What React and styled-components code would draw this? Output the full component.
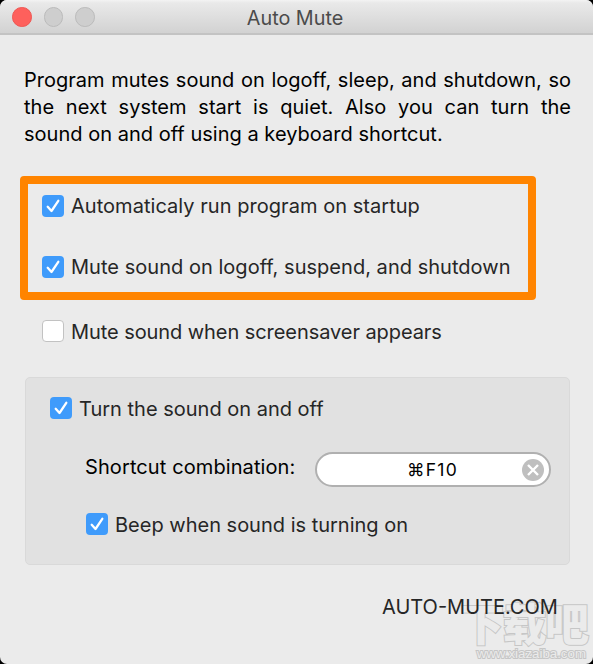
import { useState } from 'react';
import styled, { createGlobalStyle } from 'styled-components';

const GlobalStyle = createGlobalStyle`
    * {
        box-sizing: border-box;
    }

    body {
        margin: 0;
        background: #000;
        overflow: hidden;
    }
`;

const startupOptions = [
    { id: 'startup', label: 'Automaticaly run program on startup', spacing: '0.04px' },
    { id: 'logoff', label: 'Mute sound on logoff, suspend, and shutdown', spacing: '0.03px' },
];

const CheckOption = ({ label, checked, onToggle, spacing, lift }) => (
    <OptionLabel>
        <HiddenInput type="checkbox" checked={checked} onChange={onToggle} />
        <CheckBox $checked={checked}>
            {checked && (
                <svg width="22" height="22" viewBox="0 0 22 22" fill="none">
                    <path
                        d="M5.7 11.8 L9.5 16 L16.3 5.8"
                        stroke="#fff"
                        strokeWidth="2.3"
                        strokeLinecap="round"
                        strokeLinejoin="round"
                    />
                </svg>
            )}
        </CheckBox>
        <OptionText $spacing={spacing} $lift={lift}>
            {label}
        </OptionText>
    </OptionLabel>
);

const App = () => {
    const [options, setOptions] = useState({
        startup: true,
        logoff: true,
        screensaver: false,
        shortcut: true,
        beep: true,
    });
    const [shortcut, setShortcut] = useState('⌘F10');

    const toggle = (id) => setOptions((prev) => ({ ...prev, [id]: !prev[id] }));

    return (
        <>
            <GlobalStyle />
            <Window>
                <TitleBar>
                    <Lights>
                        <Light $active />
                        <Light />
                        <Light />
                    </Lights>
                    <Title>Auto Mute</Title>
                </TitleBar>
                <Content>
                    <Description>
                        Program mutes sound on logoff, sleep, and shutdown, so the next system start is
                        quiet. Also you can turn the sound&nbsp;on and off using a keyboard shortcut.
                    </Description>
                    <Highlight>
                        {startupOptions.map(({ id, label, spacing }) => (
                            <CheckOption
                                key={id}
                                label={label}
                                spacing={spacing}
                                lift
                                checked={options[id]}
                                onToggle={() => toggle(id)}
                            />
                        ))}
                    </Highlight>
                    <ScreensaverRow>
                        <CheckOption
                            label="Mute sound when screensaver appears"
                            spacing="-0.07px"
                            checked={options.screensaver}
                            onToggle={() => toggle('screensaver')}
                        />
                    </ScreensaverRow>
                    <Panel>
                        <CheckOption
                            label="Turn the sound on and off"
                            checked={options.shortcut}
                            onToggle={() => toggle('shortcut')}
                        />
                        <ShortcutRow>
                            <ShortcutLabel>Shortcut combination:</ShortcutLabel>
                            <ShortcutField>
                                <ShortcutValue>{shortcut}</ShortcutValue>
                                <ClearButton aria-label="Clear" onClick={() => setShortcut('')}>
                                    <svg width="22" height="22" viewBox="0 0 22 22">
                                        <circle cx="11" cy="11" r="11" fill="#bfbfbf" />
                                        <path
                                            d="M6 6 L16 16 M16 6 L6 16"
                                            stroke="#fff"
                                            strokeWidth="2.4"
                                        />
                                    </svg>
                                </ClearButton>
                            </ShortcutField>
                        </ShortcutRow>
                        <BeepRow>
                            <CheckOption
                                label="Beep when sound is turning on"
                                checked={options.beep}
                                onToggle={() => toggle('beep')}
                            />
                        </BeepRow>
                    </Panel>
                    <SiteLink>AUTO-MUTE.COM</SiteLink>
                </Content>
                <Watermark>
                    <WatermarkName>
                        <span>下</span>
                        <span>载</span>
                        <span>吧</span>
                    </WatermarkName>
                    <WatermarkUrl>www.xiazaiba.com</WatermarkUrl>
                </Watermark>
            </Window>
        </>
    );
};

export default App;

const Window = styled.div`
    position: relative;
    width: 593px;
    height: 664px;
    overflow: hidden;
    border-radius: 7px;
    background: #ebebeb;
    color: #000;
    font-family: Inter, 'Noto Sans CJK SC', sans-serif;
    font-size: 20px;
`;

const TitleBar = styled.header`
    display: grid;
    grid-template-columns: 1fr auto 1fr;
    align-items: center;
    height: 35px;
    padding: 0 12px;
    border-bottom: 2px solid #c3c3c3;
    background: linear-gradient(#f3f3f3 0, #e9e9e9 3px, #d2d2d2 100%);
`;

const Lights = styled.div`
    display: flex;
    gap: 12px;
    padding-top: 1px;
`;

const Light = styled.span`
    width: 19.5px;
    height: 19.5px;
    border: 1px solid ${({ $active }) => ($active ? '#ee5450' : '#bababa')};
    border-radius: 50%;
    background: ${({ $active }) => ($active ? '#fe605c' : '#cecece')};
`;

const Title = styled.h1`
    margin: 0 0 0 -3px;
    padding-top: 2px;
    color: #4b4b4b;
    font-size: 19.8px;
    font-weight: 400;
    line-height: 24px;
    white-space: nowrap;
`;

const Content = styled.main`
    display: flex;
    flex-direction: column;
    align-items: flex-start;
`;

const Description = styled.p`
    width: 547px;
    margin: 32px 0 0 24px;
    letter-spacing: 0.02px;
    line-height: 27px;
    text-align: justify;
`;

const Highlight = styled.section`
    display: flex;
    flex-direction: column;
    gap: 39px;
    width: 516px;
    height: 124px;
    margin: 28px 0 0 20px;
    padding: 11px 0 0 14px;
    border: 8px solid #ff8400;
    border-radius: 4px;
`;

const OptionLabel = styled.label`
    display: flex;
    align-items: center;
    gap: 7px;
    height: 22px;
    color: #262626;
    white-space: nowrap;
`;

const HiddenInput = styled.input`
    position: absolute;
    opacity: 0;
    width: 0;
    height: 0;
    margin: 0;
`;

const CheckBox = styled.span`
    display: flex;
    align-items: center;
    justify-content: center;
    flex: none;
    width: 22px;
    height: 22px;
    border: ${({ $checked }) => ($checked ? 'none' : '1px solid #c2c2c2')};
    border-radius: 4px;
    background: ${({ $checked }) => ($checked ? '#3f9bfb' : '#fff')};
`;

const OptionText = styled.span`
    padding-top: ${({ $lift }) => ($lift ? '0' : '1px')};
    padding-bottom: ${({ $lift }) => ($lift ? '1px' : '0')};
    line-height: 24px;
    letter-spacing: ${({ $spacing }) => $spacing || '0'};
`;

const ScreensaverRow = styled.div`
    margin: 20px 0 0 42px;
`;

const Panel = styled.section`
    width: 545px;
    height: 188px;
    margin: 35px 0 0 25px;
    padding: 19px 0 0 24px;
    border: 1px solid #d9d9d9;
    border-radius: 5px;
    background: #e1e1e1;
`;

const ShortcutRow = styled.div`
    display: flex;
    align-items: center;
    gap: 19px;
    margin: 33px 0 0 35px;
`;

const ShortcutLabel = styled.span`
    flex: none;
    width: 211px;
    padding-bottom: 5px;
    letter-spacing: 0.1px;
    line-height: 24px;
    white-space: nowrap;
`;

const ShortcutField = styled.div`
    display: flex;
    align-items: center;
    width: 236px;
    height: 35px;
    padding: 0 5px 0 26px;
    border: 2px solid #b0b0b0;
    border-radius: 18px;
    background: #fff;
`;

const ShortcutValue = styled.span`
    flex: 1;
    font-size: 17.5px;
    letter-spacing: 1.2px;
    text-align: center;
`;

const ClearButton = styled.button`
    display: flex;
    padding: 0;
    border: none;
    background: none;
`;

const BeepRow = styled.div`
    margin: 26px 0 0 36px;
`;

const SiteLink = styled.a`
    position: relative;
    z-index: 1;
    margin: 30px 0 0 382px;
    color: #262626;
    line-height: 24px;
    white-space: nowrap;
`;

/* faint mark laid over the corner of the window */
const Watermark = styled.div`
    position: absolute;
    right: 7px;
    bottom: 3px;
    width: 124px;
    color: #ebebeb;
    font-family: 'Noto Sans CJK SC', sans-serif;
    font-weight: 900;
    paint-order: stroke fill;
    -webkit-text-stroke: 2px #c6c6c6;
`;

const WatermarkName = styled.div`
    display: flex;
    justify-content: space-between;
    height: 46px;
    margin: 0 -1px 0 -2px;
    font-size: 44px;
    line-height: 42px;

    span {
        width: 42px;
    }
`;

const WatermarkUrl = styled.div`
    font-family: 'Liberation Sans', sans-serif;
    font-size: 13.3px;
    font-weight: 400;
    line-height: 14px;
    text-align: right;
`;
